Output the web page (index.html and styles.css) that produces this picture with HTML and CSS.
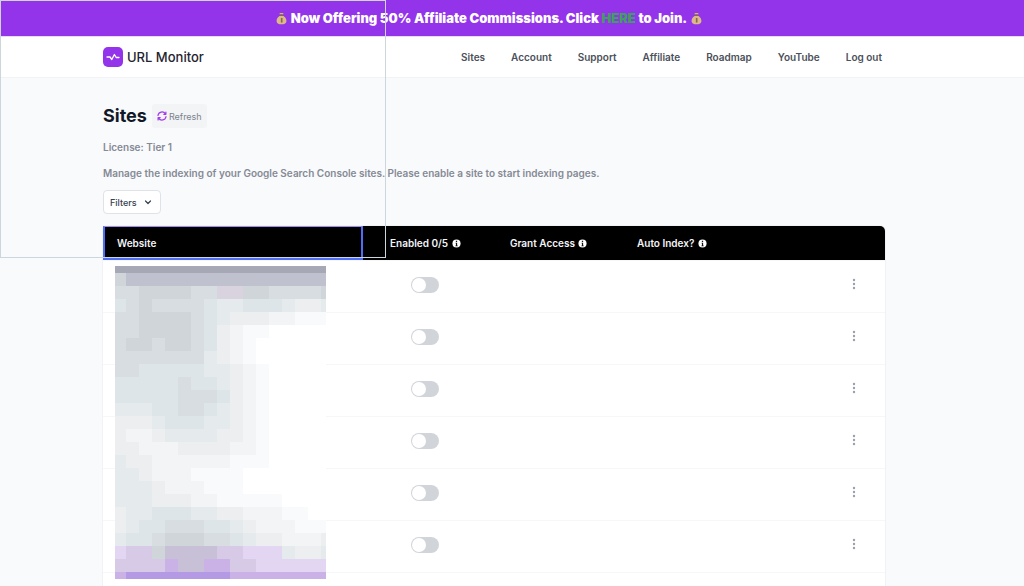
FILE: index.html
```html
<!DOCTYPE html>
<html lang="en">
<head>
<meta charset="utf-8">
<title>URL Monitor</title>
<link rel="stylesheet" href="styles.css">
</head>
<body>
<svg class="defs" aria-hidden="true">
  <symbol id="bag" viewBox="0 0 12 14">
    <path d="M4 1h4v1.6H4z" fill="#d9b46a"/>
    <path d="M4.6 2.6h2.8L8.6 5H3.4z" fill="#7d6a4a"/>
    <path d="M3.8 4.4h4.4C10 5.6 11.4 7.600 11.4 9.600c0 2.400-2 3.700-5.400 3.700S.6 12 .6 9.600c0-2 1.400-4 3.200-5.200z" fill="#dcb98a"/>
    <path d="M5.300 6.400h1.800v5H5.300z" fill="#8a6a48"/>
  </symbol>
  <symbol id="info" viewBox="0 0 10 10">
    <circle cx="5" cy="5" r="4.500" fill="#fff"/>
    <path d="M4.300 2h1.400v1.300H4.300zM4 4.200h1.700v2.900h.6V8H3.800v-.9h.6v-2H4z" fill="#111"/>
  </symbol>
  <symbol id="dots" viewBox="0 0 4 12">
    <circle cx="2" cy="2" r="1.200"/><circle cx="2" cy="6" r="1.200"/><circle cx="2" cy="10" r="1.200"/>
  </symbol>
</svg>

<div class="banner"><div class="banner-text">
  <svg class="bag"><use href="#bag"/></svg>
  <span>Now Offering 50% Affiliate Commissions. Click <a href="#">HERE</a> to Join.</span>
  <svg class="bag"><use href="#bag"/></svg>
</div></div>

<header class="header">
  <div class="container header-row">
    <a class="brand" href="#">
      <svg class="logo" viewBox="0 0 20 20"><rect width="20" height="20" rx="5" fill="#9333ea"/><path d="M4 10h3l1.800 2.500 2.600-5 1.800 3H16" fill="none" stroke="#fff" stroke-width="1.300" stroke-linecap="round" stroke-linejoin="round"/></svg>
      URL Monitor
    </a>
    <nav class="nav">
      <a href="#">Sites</a><a href="#">Account</a><a href="#">Support</a><a href="#">Affiliate</a><a href="#">Roadmap</a><a href="#">YouTube</a><a href="#">Log out</a>
    </nav>
  </div>
</header>

<main class="main">
  <div class="container">
    <div class="title-row">
      <h1>Sites</h1>
      <button class="refresh" type="button">
        <svg viewBox="0 0 10 10" fill="none" stroke="#a03cee" stroke-width="1.200" stroke-linecap="round" stroke-linejoin="round"><path d="M1 4.500A4 4 0 0 1 8.400 2.900M8.900 1v2.300H6.800M9 5.500A4 4 0 0 1 1.600 7.100M1.100 9V6.700h2.100"/></svg>
        Refresh
      </button>
    </div>
    <p class="license">License: Tier 1</p>
    <p class="intro">Manage the indexing of your Google Search Console sites. Please enable a site to start indexing pages.</p>
    <button class="filters" type="button">Filters
      <svg viewBox="0 0 8 8" fill="none" stroke="#374151" stroke-width="1.200" stroke-linecap="round" stroke-linejoin="round"><path d="M1.500 3 4 5.500 6.500 3"/></svg>
    </button>
    <div class="table-wrap">
      <table class="sites">
        <colgroup><col class="c-site"><col class="c-enabled"><col class="c-grant"><col><col class="c-menu"></colgroup>
        <thead><tr>
          <th>Website</th>
          <th>Enabled 0/5 <svg class="info"><use href="#info"/></svg></th>
          <th>Grant Access <svg class="info"><use href="#info"/></svg></th>
          <th>Auto Index? <svg class="info"><use href="#info"/></svg></th>
          <th></th>
        </tr></thead>
        <tbody id="rows"></tbody>
      </table>
      <div class="cell-outline"></div>
      <svg class="mosaic" id="mosaic" viewBox="0 0 211 313" shape-rendering="crispEdges"></svg>
    </div>
  </div>
</main>
<div class="selection"></div>
<script src="script.js"></script>
</body>
</html>
```
FILE: styles.css
```css
* { box-sizing: border-box; }
html { height: 100%; overflow: hidden; }
body {
  margin: 0;
  height: 100%;
  overflow: hidden;
  position: relative;
  background: #f9fafc;
  font-family: Inter, "Liberation Sans", sans-serif;
  font-size: 10px;
  color: #374151;
}
a { color: inherit; text-decoration: none; }
button { font: inherit; cursor: pointer; }
.defs { position: absolute; width: 0; height: 0; }
.container { max-width: 782px; margin: 0 auto; }

.banner {
  height: 36px;
  padding-right: 46px;
  background: #9333ea;
  color: #fff;
  font-size: 13px;
  font-weight: 900;
}
.banner-text { height: 100%; display: flex; align-items: center; justify-content: center; gap: 4px; }
.banner a { color: #3f9f63; }
.bag { width: 11px; height: 13px; }

.header { background: #fff; border-top: 1px solid #ead9fb; border-bottom: 1px solid #f1f3f5; padding-right: 36px; }
.header-row { display: flex; align-items: center; justify-content: space-between; height: 40px; }
.brand { display: flex; align-items: center; gap: 4px; font-size: 13px; font-weight: 500; color: #1f2430; }
.logo { width: 20px; height: 20px; }
.nav { display: flex; gap: 26px; padding-right: 3px; font-weight: 600; color: #4b505a; }

.main { padding: 26px 36px 0 0; }
.title-row { display: flex; align-items: center; gap: 5px; height: 24px; }
h1 { margin: 0; font-size: 18px; line-height: 24px; font-weight: 700; color: #111827; }
.refresh {
  display: flex; align-items: center; gap: 2px; height: 24px; padding: 0 5px;
  border: 0; border-radius: 3px; background: #f3f4f6; color: #7d828d; font-size: 9px;
}
.refresh svg { width: 10px; height: 10px; }
p { margin: 0; line-height: 16px; font-weight: 600; color: #858a95; }
.license { margin-top: 11px; }
.intro { margin-top: 10px; }
.filters {
  display: flex; align-items: center; gap: 7px; height: 24px; margin-top: 9px; padding: 0 8px 0 6px;
  border: 1px solid #dfe2e7; border-radius: 4px; background: #fff;
  color: #374151; font-size: 9px; font-weight: 500;
}
.filters svg { width: 8px; height: 8px; }

.table-wrap { position: relative; margin-top: 12px; box-shadow: 0 0 0 1px #f1f2f5; border-radius: 5px; background: #fff; }
.sites { width: 100%; table-layout: fixed; border-collapse: separate; border-spacing: 0; }
.c-site { width: 273px; }
.c-enabled { width: 120px; }
.c-grant { width: 127px; }
.c-menu { width: 62px; }
th {
  height: 34px; padding: 0 0 0 14px; background: #000; color: #f3f4f6;
  text-align: left; font-size: 10px; font-weight: 600; white-space: nowrap;
}
th:first-child { border-top-left-radius: 5px; }
th:last-child { border-top-right-radius: 5px; }
.info { width: 9px; height: 9px; margin-left: 1px; vertical-align: -1px; }
td { height: 52px; padding: 0 0 3px; border-top: 1px solid #f6f7f9; }
.enabled { padding-left: 35px; }
.menu { text-align: center; }
.toggle {
  appearance: none; display: block; width: 28px; height: 16px; margin: 0; padding: 1px;
  border-radius: 8px; background: #d1d5da;
}
.toggle::before { content: ""; display: block; width: 14px; height: 14px; border-radius: 7px; background: #fff; }
.toggle:checked { background: #9333ea; }
.toggle:checked::before { margin-left: 12px; }
.kebab { display: inline-flex; padding: 0; border: 0; background: none; }
.kebab svg { width: 4px; height: 12px; fill: #9aa0aa; }

.cell-outline { position: absolute; left: 0; top: 0; width: 260px; height: 34px; border: 2px solid #4f6ef7; border-top: 1px solid #a58bea; }
.mosaic { position: absolute; left: 12px; top: 40px; width: 211px; height: 313px; }
.selection {
  position: absolute; left: 0; top: 0; width: 386px; height: 258px;
  border: 1px solid #cdd5dd; pointer-events: none;
}
```
FILE: script.js
```js
const colors = {
  a: '#a6a8b5', b: '#bfc1ce', c: '#d0d5d9', d: '#d7dde1', e: '#dde5e8', f: '#e5eaed',
  g: '#edeef0', h: '#f3f4f6', i: '#f9fafc', w: '#ffffff',
  p: '#cbb2e6', q: '#e3d6f2', r: '#b49ae5', s: '#d7cae6', t: '#c8c0d6', v: '#d9d3df'
};
const cells = [
  'aaaaaaaaaaaaaaaaa',
  'cbbbbbbbbbbbbbbbb',
  'ddccccddvvccddddc',
  'edcddddeffeeefggf',
  'ddccccdefggghhiii',
  'ddccccdeghiiwwwww',
  'dccdccdeghiwwwwww',
  'dddddddfghiwwwwww',
  'ddeeeeeffghiwwwww',
  'eeeeedeefghiwwwww',
  'eeeeedddeghiwwwww',
  'fffeeddefghiwwwww',
  'gggfeeeffghiwwwww',
  'ghhgffffgghiwwwww',
  'gghhhgggghhiwwwww',
  'fgghhhhhhiiiwwwww',
  'ffghhhiiiiwwwwwww',
  'fffghhhiiiwwwwwww',
  'fffggghhiiiiiwwww',
  'gffeeeffgghhhiiww',
  'gfeedddeefghhhiii',
  'feedcccddefgghhhg',
  'qsscttttssqqqfggf',
  'sssspttppssqqqqqq',
  'prrrrrrrrpppppppp'
];
const NS = 'http://www.w3.org/2000/svg';
const mosaic = document.getElementById('mosaic');
const edge = (n, first, max) => n === 0 ? 0 : Math.min(first + (n - 1) * 13, max);
cells.forEach((line, row) => {
  [...line].forEach((key, col) => {
    const x = edge(col, 11, 211), y = edge(row, 7, 313);
    const rect = document.createElementNS(NS, 'rect');
    rect.setAttribute('x', x);
    rect.setAttribute('y', y);
    rect.setAttribute('width', edge(col + 1, 11, 211) - x);
    rect.setAttribute('height', edge(row + 1, 7, 313) - y);
    rect.setAttribute('fill', colors[key]);
    mosaic.append(rect);
  });
});

const rows = document.getElementById('rows');
for (let n = 1; n <= 7; n++) {
  rows.insertAdjacentHTML('beforeend', `<tr><td></td>
    <td class="enabled"><input class="toggle" type="checkbox" aria-label="Enable site ${n}"></td>
    <td></td><td></td>
    <td class="menu"><button class="kebab" type="button" aria-label="Site ${n} options"><svg><use href="#dots"/></svg></button></td></tr>`);
}
```
